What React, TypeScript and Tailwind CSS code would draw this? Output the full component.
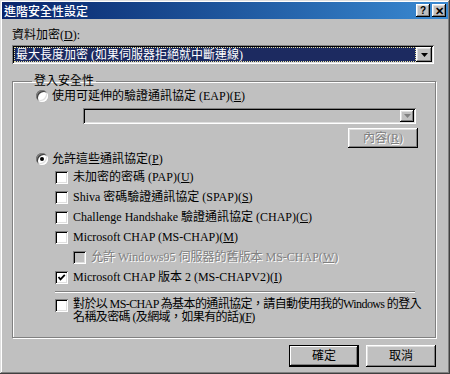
import { ReactNode } from "react";

const raised =
  "shadow-[inset_-1px_-1px_#000,inset_1px_1px_#fff,inset_-2px_-2px_#808080,inset_2px_2px_#dfdfdf]";
const sunken =
  "shadow-[inset_1px_1px_#808080,inset_-1px_-1px_#fff,inset_2px_2px_#000,inset_-2px_-2px_#dfdfdf]";
const disabledText = "text-[#808080] [text-shadow:1px_1px_0_#fff]";

const Arrow = ({ color = "#000" }: { color?: string }) => (
  <svg width="7" height="4" viewBox="0 0 7 4">
    <path d="M0 0h7L3.5 4z" fill={color} />
  </svg>
);

const Radio = ({ checked }: { checked?: boolean }) => (
  <span className="relative flex w-[12px] h-[12px] shrink-0 items-center justify-center rounded-full bg-white shadow-[inset_1px_1px_#808080,inset_-1px_-1px_#fff,inset_2px_2px_#404040,inset_-2px_-2px_#dfdfdf]">
    {checked && <span className="w-[4px] h-[4px] rounded-full bg-black" />}
  </span>
);

const Check = ({ checked, disabled }: { checked?: boolean; disabled?: boolean }) => (
  <span
    className={`flex w-[13px] h-[13px] shrink-0 items-center justify-center ${
      disabled ? "bg-[#c0c0c0]" : "bg-white"
    } ${sunken}`}
  >
    {checked && (
      <svg width="9" height="9" viewBox="0 0 9 9">
        <path d="M1.5 4 L3.5 6.3 L7.8 1.8" stroke="#000" strokeWidth="1.8" fill="none" />
      </svg>
    )}
  </span>
);

const Row = ({ children, indent, disabled, checked }: { children: ReactNode; indent?: boolean; disabled?: boolean; checked?: boolean }) => (
  <div className={`flex h-[20px] items-center gap-[5px] ${indent ? "pl-[60px]" : "pl-[42px]"}`}>
    <Check checked={checked} disabled={disabled} />
    <span className={disabled ? disabledText : ""}>{children}</span>
  </div>
);

function App() {
  return (
    <div className="w-[450px] h-[374px] bg-[#c0c0c0] p-[2px] text-[12px] leading-[14px] text-black font-['Liberation_Serif','Noto_Sans_CJK_TC',serif] shadow-[inset_-1px_-1px_#404040,inset_1px_1px_#dfdfdf,inset_-2px_-2px_#808080,inset_2px_2px_#fff] flex flex-col">
      {/* title bar */}
      <div className="flex h-[17px] items-center justify-between bg-gradient-to-r from-[#0a246a] to-[#3a8ad2] pl-[2px] pr-[2px]">
        <span className="font-['Noto_Sans_CJK_TC',sans-serif] text-[12px] font-medium text-white">進階安全性設定</span>
        <div className="flex gap-[2px]">
          <span className={`flex w-[14px] h-[13px] items-center justify-center bg-[#c0c0c0] text-[10px] font-bold font-['Liberation_Sans',sans-serif] ${raised}`}>?</span>
          <span className={`flex w-[14px] h-[13px] items-center justify-center bg-[#c0c0c0] text-[11px] font-bold font-['Liberation_Sans',sans-serif] ${raised}`}>✕</span>
        </div>
      </div>

      <div className="flex flex-col px-[10px]">
        <div className="mt-[9px] h-[14px]">
          資料加密(<u>D</u>):
        </div>
        {/* combo */}
        <div className={`mt-[3px] flex h-[19px] w-[422px] items-center bg-white p-[2px] ${sunken}`}>
          <div className="flex h-full flex-1 items-center bg-[#1c2a60] px-[2px] text-white outline-1 outline-dotted outline-[#e8e0a0] -outline-offset-1">
            最大長度加密 (如果伺服器拒絕就中斷連線)
          </div>
          <span className={`flex h-[15px] w-[16px] items-center justify-center bg-[#c0c0c0] ${raised}`}>
            <Arrow />
          </span>
        </div>

        {/* group */}
        <fieldset className="mt-[10px] h-[264px] w-[424px] border border-[#808080] shadow-[1px_1px_#fff,inset_1px_1px_#fff]">
          <legend className="ml-[19px] px-[2px] leading-[14px]">登入安全性</legend>
          <div className="flex h-[16px] items-center gap-[4px] pl-[23px]">
            <Radio />
            <span>
              使用可延伸的驗證通訊協定 (EAP)(<u>E</u>)
            </span>
          </div>
          <div className={`ml-[70px] mt-[4px] flex h-[16px] w-[333px] items-center justify-end bg-[#c0c0c0] p-[2px] ${sunken}`}>
            <span className={`flex h-[12px] w-[14px] items-center justify-center bg-[#c0c0c0] ${raised}`}>
              <Arrow color="#808080" />
            </span>
          </div>
          <div className="mt-[4px] flex justify-end pr-[17px]">
            <span className={`flex h-[20px] w-[70px] items-center justify-center bg-[#c0c0c0] ${disabledText} ${raised}`}>
              內容(<u>R</u>)
            </span>
          </div>
          <div className="mt-[3px] flex h-[16px] items-center gap-[4px] pl-[23px]">
            <Radio checked />
            <span>
              允許這些通訊協定(<u>P</u>)
            </span>
          </div>
          <Row>
            未加密的密碼 (PAP)(<u>U</u>)
          </Row>
          <Row>
            Shiva 密碼驗證通訊協定 (SPAP)(<u>S</u>)
          </Row>
          <Row>
            Challenge Handshake 驗證通訊協定 (CHAP)(<u>C</u>)
          </Row>
          <Row>
            Microsoft CHAP (MS-CHAP)(<u>M</u>)
          </Row>
          <Row indent disabled>
            允許 Windows95 伺服器的舊版本 MS-CHAP(<u>W</u>)
          </Row>
          <Row checked>
            Microsoft CHAP 版本 2 (MS-CHAPV2)(<u>I</u>)
          </Row>
          <div className="ml-[42px] mt-[4px] h-[2px] w-[360px] border-t border-b border-t-[#808080] border-b-white" />
          <div className="mt-[5px] flex items-start gap-[5px] pl-[42px]">
            <span className="mt-[1px]">
              <Check />
            </span>
            <span className="whitespace-nowrap leading-[13px] tracking-[-0.6px]">
              對於以 MS-CHAP 為基本的通訊協定，請自動使用我的Windows 的登入
              <br />
              名稱及密碼 (及網域，如果有的話)(<u>F</u>)
            </span>
          </div>
        </fieldset>

        {/* buttons */}
        <div className="mt-[7px] flex justify-end gap-[7px] pr-[2px]">
          <span className="flex h-[22px] w-[70px] items-center justify-center bg-[#c0c0c0] outline outline-1 outline-black -outline-offset-1 shadow-[inset_-2px_-2px_#000,inset_2px_2px_#fff,inset_-3px_-3px_#808080]">
            確定
          </span>
          <span className={`flex h-[22px] w-[70px] items-center justify-center bg-[#c0c0c0] ${raised}`}>取消</span>
        </div>
      </div>
    </div>
  );
}

export default App;
